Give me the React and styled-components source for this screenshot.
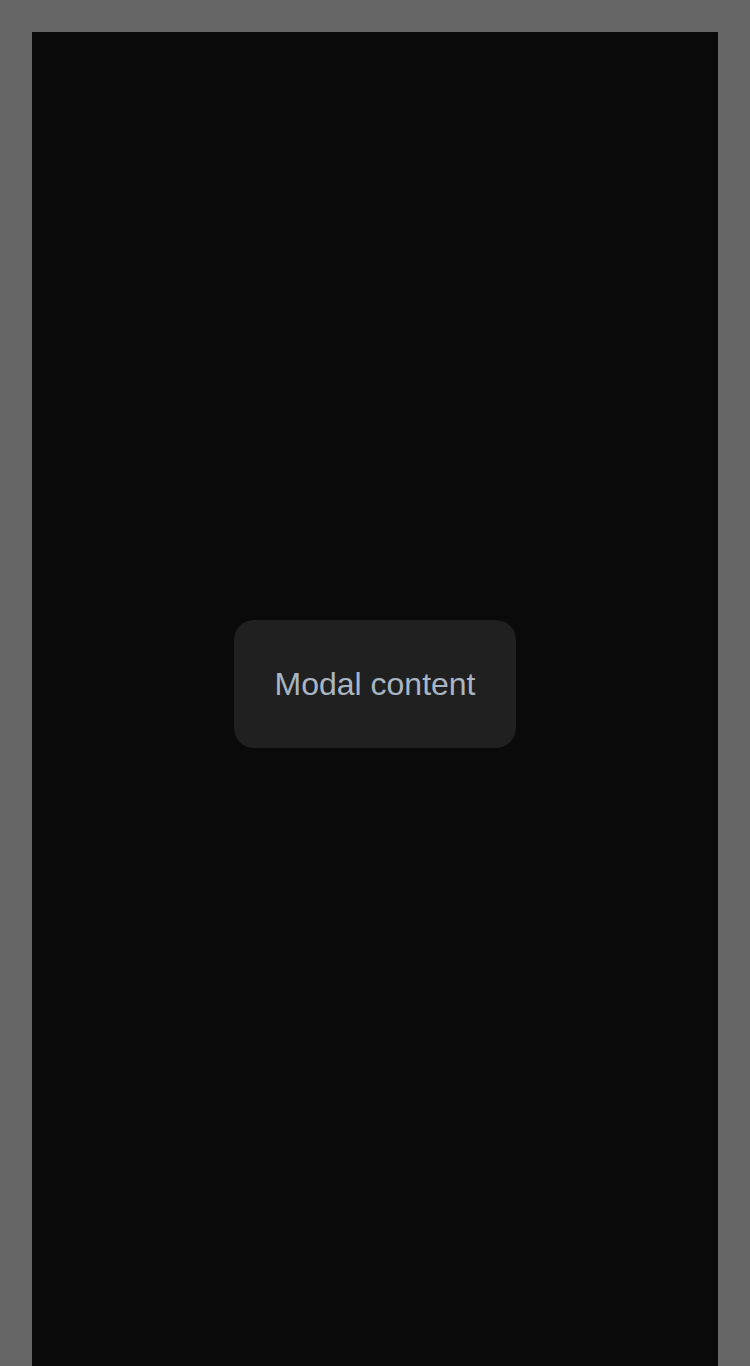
import React from "react";
import styled, { createGlobalStyle } from "styled-components";

const Global = createGlobalStyle`
  html, body { margin: 0; padding: 0; background: #666666; }
  body { font-family: "Liberation Sans", Arial, sans-serif; }
`;

const Page = styled.div`
  padding: 32px 32px 0 32px;
`;

const Panel = styled.main`
  background: #0a0a0a;
  min-height: 1400px;
`;

const Overlay = styled.div`
  position: fixed;
  inset: 0;
  padding-top: 2px;
  display: flex;
  align-items: center;
  justify-content: center;
`;

const Modal = styled.div`
  background: #202020;
  border-radius: 20px;
  padding: 40px;
  color: #a9b6c4;
  font-size: 32px;
  line-height: 48px;
`;

export default function App() {
  return (
    <>
      <Global />
      <Page>
        <Panel />
      </Page>
      <Overlay>
        <Modal>Modal content</Modal>
      </Overlay>
    </>
  );
}
